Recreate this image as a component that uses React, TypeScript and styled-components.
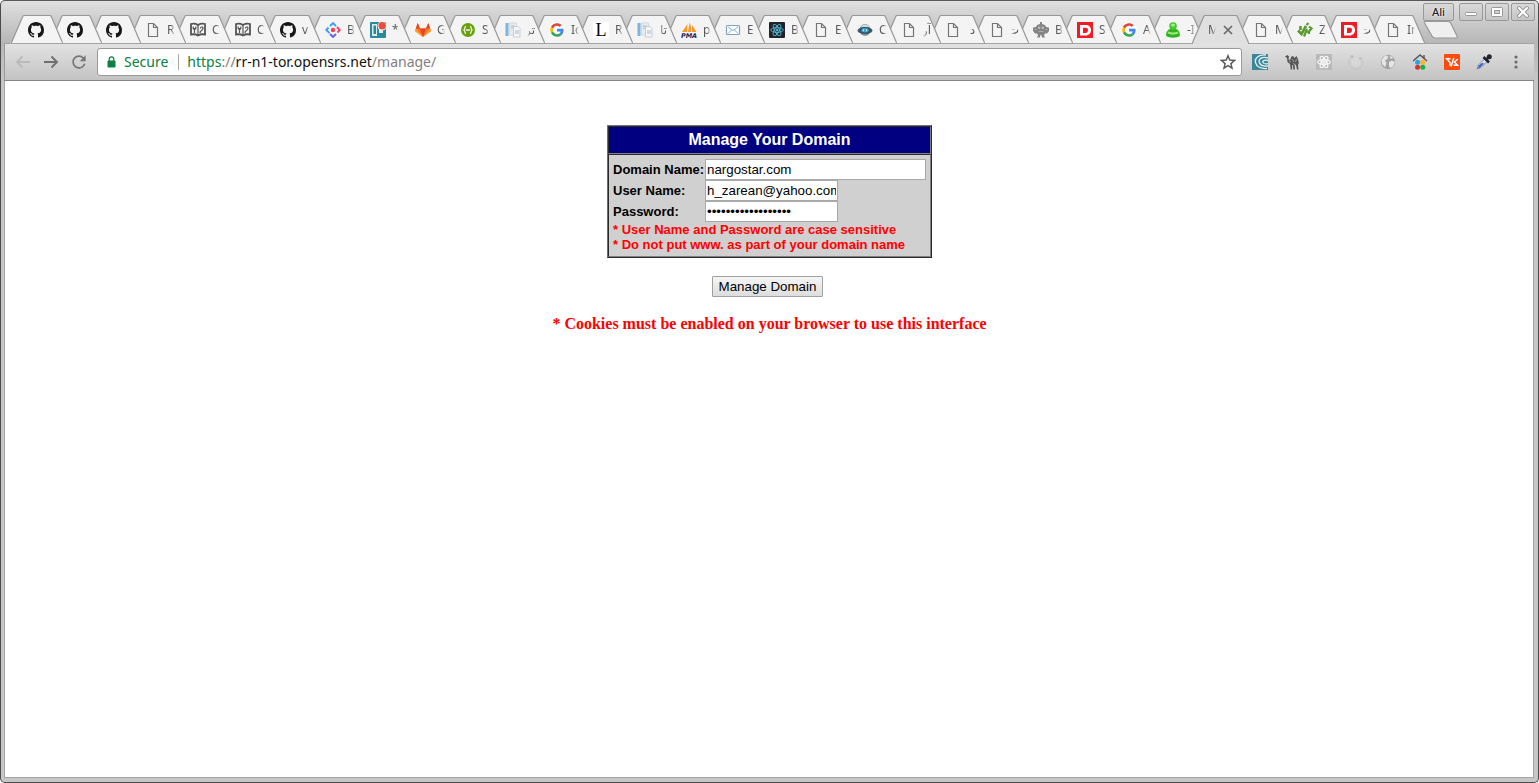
import React from "react";
import styled, { createGlobalStyle } from "styled-components";

const GlobalStyle = createGlobalStyle`
  * { box-sizing: border-box; }
  html, body { margin: 0; padding: 0; background: #ffffff; }
`;

const ui = `"Noto Sans", "DejaVu Sans", sans-serif`;
const arial = `"Liberation Sans", Arial, sans-serif`;

const Window = styled.div`
  display: flex;
  flex-direction: column;
  min-height: 100vh;
  padding: 0 4px 4px;
  border: 1px solid #4b4b4b;
  border-top-color: #5a575c;
  border-radius: 5px;
  background: linear-gradient(#e0e0e0 0, #b6b6b6 42px, #c6c6c6 80px, #c6c6c6 100%);
  position: relative;
  font-family: ${ui};
`;

const TitleBar = styled.header`
  display: flex;
  align-items: flex-end;
  height: 42px;
  padding-left: 6px;
`;

const TabStrip = styled.nav`
  display: flex;
  align-items: flex-end;
  padding-right: 13px;
`;

const TabButton = styled.button<{ $width: number; $order: number; $active?: boolean }>`
  position: relative;
  z-index: ${(p) => (p.$active ? 60 : p.$order)};
  flex: none;
  display: flex;
  align-items: center;
  gap: 6px;
  width: ${(p) => p.$width}px;
  height: ${(p) => (p.$active ? 29 : 28)}px;
  margin: 0 -13px ${(p) => (p.$active ? -1 : 0)}px 0;
  padding: ${(p) => (p.$active ? "0 0 0 16px" : "2px 0 0 17px")};
  border: 0;
  background: none;
  color: #5a5a5a;
  font-family: ${ui};
  font-size: 12px;
`;

const TabShape = styled.svg`
  position: absolute;
  inset: 0;
  z-index: -1;
`;

const TabLabel = styled.span<{ $rtl?: boolean }>`
  width: 8px;
  overflow: hidden;
  white-space: nowrap;
  line-height: 16px;
  direction: ${(p) => (p.$rtl ? "rtl" : "ltr")};
  text-align: ${(p) => (p.$rtl ? "right" : "left")};
  mask-image: linear-gradient(to ${(p) => (p.$rtl ? "left" : "right")}, #000 50%, transparent);
`;

const Favicon = styled.svg`
  flex: none;
  display: block;
  width: 16px;
  height: 16px;
`;

const NewTab = styled.button`
  width: 36px;
  height: 18px;
  margin: 0 0 4px -2px;
  padding: 0;
  border: 0;
  background: none;
  svg { display: block; }
`;

const WindowControls = styled.div`
  position: absolute;
  top: 2px;
  right: 3px;
  display: flex;
  gap: 2px;
`;

const ControlButton = styled.button<{ $user?: boolean }>`
  display: flex;
  align-items: center;
  justify-content: center;
  width: ${(p) => (p.$user ? 31 : 24)}px;
  height: 18px;
  margin-right: ${(p) => (p.$user ? 3 : 0)}px;
  padding: 0;
  border: 1px solid #989898;
  border-radius: 2px;
  background: linear-gradient(#d9d9d9, #c6c6c6);
  color: #222222;
  font-family: ${ui};
  font-size: 11px;
  font-weight: 500;
  line-height: 14px;
  text-shadow: 0 0 2px #ffffff, 0 0 2px #ffffff;
`;

const Toolbar = styled.div`
  display: flex;
  align-items: center;
  height: 38px;
  padding: 0 2px 0 4px;
  border-top: 1px solid #a3a3a3;
  border-bottom: 1px solid #858585;
  border-left: 1px solid #9a9a9a;
  margin-left: -1px;
  background: linear-gradient(#e2e2e2, #c3c3c3);
`;

const IconButton = styled.button`
  display: flex;
  align-items: center;
  justify-content: center;
  width: 28px;
  height: 28px;
  padding: 0;
  border: 0;
  background: none;
`;

const AddressBar = styled.div`
  flex: 1;
  display: flex;
  align-items: center;
  height: 28px;
  margin: 0 2px 0 4px;
  padding: 0 5px 0 9px;
  border: 1px solid #9a9a9a;
  border-radius: 3px;
  background: #ffffff;
  font-size: 14px;
  line-height: 20px;
`;

const Secure = styled.span`
  margin-left: 8px;
  padding-right: 10px;
  color: #0b8043;
`;

const Divider = styled.span`
  width: 1px;
  height: 16px;
  margin-right: 8px;
  background: #a8a8a8;
`;

const Address = styled.span`
  flex: 1;
  color: #808080;
`;
const Scheme = styled.span`color: #0b8043;`;
const Host = styled.span`color: #111111;`;

const StarButton = styled(IconButton)`
  width: 16px;
  height: 20px;
`;

const ExtensionButton = styled(IconButton)`
  width: 32px;
`;

const Page = styled.main`
  flex: 1;
  display: flex;
  flex-direction: column;
  align-items: center;
  padding-top: 44px;
  border: 1px solid #a5a5a5;
  border-width: 0 1px 1px 0;
  background: #ffffff;
  box-shadow: -1px 0 #a5a5a5;
  padding-left: 1px;
`;

const LoginForm = styled.form`
  display: flex;
  flex-direction: column;
  align-items: center;
  margin: 0;
  font-family: ${arial};
`;

const Panel = styled.section`
  border: 1px solid;
  border-color: #707070 #2b2b2b #2b2b2b #707070;
  background: #d0d0d0;
`;

const insetBorder = `
  border: 1px solid;
  border-color: #2b2b2b #808080 #808080 #2b2b2b;
`;

const PanelTitle = styled.h1`
  ${insetBorder}
  margin: 0;
  padding: 4px;
  background: #000080;
  color: #ffffff;
  font-size: 16px;
  line-height: 18px;
  text-align: center;
`;

const PanelBody = styled.div`
  ${insetBorder}
  padding: 4px;
  font-size: 13px;
  font-weight: bold;
  line-height: 15px;
`;

const Field = styled.div`
  display: flex;
  align-items: center;
  height: 21px;
`;

const FieldLabel = styled.label`
  width: 92px;
  white-space: nowrap;
`;

const TextInput = styled.input<{ $wide?: boolean }>`
  width: ${(p) => (p.$wide ? 221 : 133)}px;
  height: 21px;
  margin: 0;
  padding: 1px;
  border: 1px solid #a9a9a9;
  background: #ffffff;
  color: #000000;
  font-family: ${arial};
  outline: none;
`;

const Hint = styled.p`
  margin: 0;
  color: #ff0000;
`;

const SubmitButton = styled.button`
  height: 21px;
  margin: 18px 4px 0 0;
  padding: 0 6px;
  border: 1px solid #a0a0a0;
  border-radius: 1px;
  background: linear-gradient(#f6f6f6, #dddddd);
  color: #000000;
  font-family: ${arial};
  line-height: 18px;
`;

const CookieNote = styled.p`
  margin: 18px 0 0;
  color: #ff0000;
  font-family: "Liberation Serif", "Times New Roman", serif;
  font-size: 16px;
  font-weight: bold;
  line-height: 18px;
`;

/* ---------- favicons ---------- */

const Github = () => (
  <Favicon viewBox="0 0 16 16">
    <path fill="#181616" d="M8 0C3.58 0 0 3.58 0 8c0 3.54 2.29 6.53 5.47 7.59.4.07.55-.17.55-.38 0-.19-.01-.82-.01-1.49-2.01.37-2.53-.49-2.69-.94-.09-.23-.48-.94-.82-1.13-.28-.15-.68-.52-.01-.53.63-.01 1.08.58 1.23.82.72 1.21 1.87.87 2.33.66.07-.52.28-.87.51-1.07-1.78-.2-3.64-.89-3.64-3.95 0-.87.31-1.59.82-2.15-.08-.2-.36-1.02.08-2.12 0 0 .67-.21 2.2.82.64-.18 1.32-.27 2-.27.68 0 1.36.09 2 .27 1.53-1.04 2.2-.82 2.2-.82.44 1.1.16 1.92.08 2.12.51.56.82 1.27.82 2.15 0 3.07-1.87 3.75-3.65 3.95.29.25.54.73.54 1.48 0 1.07-.01 1.93-.01 2.2 0 .21.15.46.55.38A8.013 8.013 0 0016 8c0-4.42-3.58-8-8-8z" />
  </Favicon>
);

const Doc = () => (
  <Favicon viewBox="0 0 16 16">
    <path d="M3.500 1.500h5l4 4v9h-9z M8.500 1.500v4h4" fill="none" stroke="#757575" strokeWidth="1.200" />
  </Favicon>
);

const Book = () => (
  <Favicon viewBox="0 0 16 16">
    <path d="M1 2C4 1.200 6 1.800 8 3c2-1.200 4-1.800 7-1v10.500c-3-.6-5-.3-7 1-2-1.300-4-1.600-7-1z" fill="#f4f4f4" stroke="#555" strokeWidth="1.800" />
    <path d="M8 3v11M4.500 6v5M3.200 4.500v2q1.300 1.500 2.600 0v-2" fill="none" stroke="#555" strokeWidth="1.200" />
    <path d="M10 11l.5-2M10.500 6.500c0-2 2.500-2 2.500-.2 0 1.700-2 1.500-2 3.200" fill="none" stroke="#555" strokeWidth="1.200" />
  </Favicon>
);

const BlueDiamond = () => (
  <Favicon viewBox="0 0 16 16">
    <path d="M3.500 5.500L1.300 8l3.200 3.200M5 4l3-2.900 3 2.900" fill="none" stroke="#3aa0f7" strokeWidth="1.900" />
    <path d="M12 5l2.800 3-2.300 2.500" fill="none" stroke="#f0405e" strokeWidth="1.900" />
    <path d="M5 12l3 2.900 3-2.900" fill="none" stroke="#5a62e8" strokeWidth="1.900" />
    <circle cx="8" cy="8" r="2.200" fill="#f2405a" />
  </Favicon>
);

const Board = () => (
  <Favicon viewBox="0 0 16 16">
    <rect width="16" height="16" rx="1" fill="#2a8a9c" />
    <path d="M2 2h5v12H2zM9 7h4v4H9z" fill="#dcebed" />
    <path d="M3.500 3.500h2.500v8.500H3.500z" fill="#2a8a9c" />
    <circle cx="12" cy="4" r="4.500" fill="#f4f4f4" />
    <circle cx="12.200" cy="3.800" r="3.700" fill="#ef4b3f" />
  </Favicon>
);

const Gitlab = () => (
  <Favicon viewBox="0 0 16 16">
    <path d="M8 15L0 9l2.700-8L5 6.500h6L13.300 1 16 9z" fill="#fc6d26" />
    <path d="M8 15L5 6.500h6z" fill="#e24329" />
    <path d="M0 9l1-3 7 9zM16 9l-1-3-7 9z" fill="#fca326" />
    <path d="M2.700 1L5 6.500H.8zM13.300 1L11 6.500h4.200z" fill="#e24329" />
  </Favicon>
);

const Swagger = () => (
  <Favicon viewBox="0 0 16 16">
    <circle cx="8" cy="8" r="7" fill="#6a9f0e" />
    <path d="M6 4.500c-2 0-.5 3-2 3.500 1.500.5 0 3.500 2 3.500M10 4.500c2 0 .5 3 2 3.500-1.500.5 0 3.500-2 3.500M6 8h4" fill="none" stroke="#eef5dc" strokeWidth="1.300" />
  </Favicon>
);

const Papers = () => (
  <Favicon viewBox="0 0 16 16">
    <rect x=".5" y="1" width="3" height="13" fill="#7db4dc" />
    <path d="M4.500 1h7v12h-7z" fill="#e8eaee" stroke="#d4d8dd" />
    <path d="M8.500 4.500H13l2 2v8.500H8.500z" fill="#f4f6f9" stroke="#c8cdd4" />
    <path d="M6 4h3M6 6h2M10 9h4M10 11h4" stroke="#aab8c8" />
  </Favicon>
);

const Google = () => (
  <Favicon viewBox="-4 -4 56 56">
    <circle cx="24" cy="24" r="28" fill="#fff" />
    <path fill="#EA4335" d="M24 9.500c3.540 0 6.710 1.220 9.210 3.600l6.850-6.850C35.900 2.380 30.470 0 24 0 14.620 0 6.510 5.380 2.560 13.220l7.980 6.190C12.430 13.720 17.740 9.500 24 9.500z" />
    <path fill="#4285F4" d="M46.980 24.550c0-1.570-.15-3.090-.38-4.550H24v9.020h12.940c-.58 2.960-2.260 5.480-4.780 7.180l7.730 6c4.510-4.180 7.090-10.360 7.090-17.650z" />
    <path fill="#FBBC05" d="M10.530 28.590c-.48-1.450-.76-2.990-.76-4.590s.27-3.140.76-4.590l-7.980-6.190C.92 16.460 0 20.120 0 24c0 3.880.92 7.540 2.560 10.780l7.970-6.190z" />
    <path fill="#34A853" d="M24 48c6.480 0 11.930-2.130 15.890-5.810l-7.730-6c-2.150 1.450-4.920 2.300-8.160 2.300-6.260 0-11.570-4.220-13.470-9.910l-7.980 6.190C6.510 42.620 14.620 48 24 48z" />
  </Favicon>
);

const LetterL = () => (
  <Favicon viewBox="0 0 16 16">
    <rect width="16" height="16" fill="#fff" />
    <text x="8" y="14" textAnchor="middle" fontFamily="Liberation Serif, serif" fontSize="18" fill="#000">L</text>
  </Favicon>
);

const Pma = () => (
  <Favicon viewBox="0 0 16 16">
    <path d="M1 10L6.500 2 6 10zM7 10L8.500.500c1.500 3 2 6 1.500 9.500zM11 10V3l4.500 7z" fill="#f8982c" />
    <text x="8" y="15.500" textAnchor="middle" fontFamily="DejaVu Sans, sans-serif" fontStyle="italic" fontWeight="bold" fontSize="6.500" fill="#24245c">PMA</text>
  </Favicon>
);

const Mail = () => (
  <Favicon viewBox="0 0 16 16">
    <rect x="1.500" y="3.500" width="13" height="9" rx="1" fill="#fff" stroke="#7fa4bd" strokeWidth="1.200" />
    <path d="M3 5l5 3.500L13 5M3 11.500L6.500 8M13 11.500L9.500 8" fill="none" stroke="#7fb2d6" />
  </Favicon>
);

const Orbits = ({ color, width = 0.9 }: { color: string; width?: number }) => (
  <g fill="none" stroke={color} strokeWidth={width}>
    {[0, 60, 120].map((a) => (
      <ellipse key={a} cx="8" cy="8" rx="6.300" ry="2.400" transform={`rotate(${a} 8 8)`} />
    ))}
    <circle cx="8" cy="8" r="1" fill={color} />
  </g>
);

const ReactDark = () => (
  <Favicon viewBox="0 0 16 16">
    <rect width="16" height="16" rx="1" fill="#20232a" />
    <Orbits color="#50b8d4" />
  </Favicon>
);

const Saturn = () => (
  <Favicon viewBox="0 0 16 16">
    <ellipse cx="8" cy="8" rx="5.500" ry="6" fill="#8b9095" />
    <path d="M3.500 5C6 1.500 10 1.500 12.500 5z" fill="#d5d7d9" />
    <ellipse cx="8" cy="8.500" rx="7.500" ry="3.600" fill="#4b5963" />
    <ellipse cx="8" cy="8.400" rx="5.200" ry="3.200" fill="#1f5673" />
    <ellipse cx="8" cy="8.300" rx="3.800" ry="2.200" fill="#3d9ac6" />
    <path d="M6.500 7.300v2M9.500 7.300v2" stroke="#cfe6f2" strokeWidth="1.200" />
  </Favicon>
);

const Robot = () => (
  <Favicon viewBox="0 0 16 16">
    <path d="M7 0h2v2l3 1 1 2 3 .5V9l-2 2.500h-2L11 13l1 2.500H9L8.500 13h-1L7 15.500H4L5 13l-1-1.500H2L0 9V5.500L3 5l1-2 3-1z" fill="#858585" />
    <path d="M5.500 5h1.500v1.500H5.500zM9 5h1.500v1.500H9zM1.500 7.500h2M12.500 7.500h2M5.500 9.500h5" fill="#ddd" stroke="#b9b9b9" strokeWidth=".8" />
  </Favicon>
);

const RedD = () => (
  <Favicon viewBox="0 0 16 16">
    <rect width="16" height="16" fill="#ee1c25" />
    <path d="M3 3h5.500C12 3 14 5 14 8s-2 5.500-5.500 5.500H3V10h3v1h2.500c1.500 0 2.500-1 2.500-3S10 5.700 8.500 5.700H3z" fill="#fff" />
    <path d="M3 5.500h3v5H3z" fill="#fff" />
  </Favicon>
);

const Messenger = () => (
  <Favicon viewBox="0 0 16 16">
    <path d="M6 6.500C2 8 .5 11 1.300 14c3 2.300 10.400 2.300 13.400 0C15.500 11 14 8 10 6.500z" fill="#2fb41c" />
    <circle cx="8" cy="4" r="3.800" fill="#45c72e" />
    <ellipse cx="8" cy="3" rx="2" ry="1.500" fill="#a9f08f" />
    <path d="M3.500 9.500c3 1.200 6 1.200 9 0l1 2c-4 1.500-7 1.500-11 0z" fill="#9be883" />
  </Favicon>
);

const GreenMark = () => (
  <Favicon viewBox="0 0 16 16">
    <path d="M3.500 4v4M1 8.500l3.500 3.500L9 4" fill="none" stroke="#5a9a2d" strokeWidth="2.600" />
    <path d="M7 14.500L10 7M9.500 3l2-2M10.500 11l4-4.500L12 4.500M12 12V9" fill="none" stroke="#5a9a2d" strokeWidth="2.200" />
  </Favicon>
);

/* ---------- extension icons ---------- */

const Swirl = () => (
  <Favicon viewBox="0 0 16 16">
    <rect width="16" height="16" fill="#3b8799" />
    <path d="M14 1C7 0 2.500 4 3.500 8.500 4.500 12.500 9 15 15 14.500M16 4C10 2 6.500 5 7.200 8c.7 3 4.300 4.500 8.800 4M16 6.500c-4-1-6 .5-5 2 .8 1.200 3 1.700 5 1.200" fill="none" stroke="#e6f1f3" strokeWidth="1.300" />
  </Favicon>
);

const Camel = () => (
  <Favicon viewBox="0 0 16 16">
    <path d="M1 2.500L3.500 1 5 2.500 4.500 5.500 6 6l1.500-3.500L9 2l1.500 2L12.500 2 14 5l.8 4-.8 2 .5 4.500H13L12 11l-1.500-1 .5 5.500H9.500L8.800 11 8 11l.3 4.500H6.800L6 10 3.500 8 3 4z" fill="#555" />
    <path d="M8 5l2 3M12.500 5l-1 3M5 7l2 1M9 9.500l2 1" stroke="#b5b5b5" strokeWidth=".8" />
  </Favicon>
);

const ReactGrey = () => (
  <Favicon viewBox="0 0 16 16">
    <rect width="16" height="16" rx="1" fill="#b9b9b9" />
    <Orbits color="#f6f6f6" width={1.3} />
  </Favicon>
);

const FaintRing = () => (
  <Favicon viewBox="0 0 16 16">
    <g fill="none" stroke="#c3c3c3">
      <path d="M2 4.500A7 7 0 1 0 14 5" />
      <circle cx="8" cy="8.500" r="3.500" stroke="#dedede" />
    </g>
    <circle cx="8" cy="8.500" r="1.500" fill="#dedede" />
    <circle cx="4" cy="2.500" r="1.500" fill="#bcbcbc" />
    <circle cx="12.500" cy="4.500" r="1.300" fill="#bcbcbc" />
  </Favicon>
);

const Globe = () => (
  <Favicon viewBox="0 0 16 16">
    <circle cx="8" cy="8" r="7.200" fill="#a4a4a4" />
    <path d="M1.500 6L5 1.500l3 .5L7.500 5 5 6.500 6.500 9 5 13 2 10zM9 8l3-1.500 3 1.500-2 4.500-3 1.500-1-3zM10 2l3 1.500-1 1.500-2-1z" fill="#e6e6e6" />
  </Favicon>
);

const House = () => (
  <Favicon viewBox="0 0 16 16">
    <path d="M1 7l7-6 7 6M12 1v3" fill="none" stroke="#555" strokeWidth="1.400" />
    <circle cx="5.600" cy="8.300" r="2.500" fill="#1fa8f0" />
    <circle cx="10.800" cy="8.300" r="2.500" fill="#f9b42b" />
    <circle cx="5.600" cy="13.300" r="2.500" fill="#e32b2b" />
    <circle cx="10.800" cy="13.300" r="2.500" fill="#1fae3c" />
  </Favicon>
);

const OrangeTag = () => (
  <Favicon viewBox="0 0 16 16">
    <rect width="16" height="16" rx="1" fill="#ff4a0d" />
    <path d="M6.500 4.700H2.700L6 8.500v3M9.800 4L7 12.500M13.800 5L10.500 8l3 3.300H9.500" fill="none" stroke="#fff" strokeWidth="1.500" />
  </Favicon>
);

const Dropper = () => (
  <Favicon viewBox="0 0 16 16">
    <path d="M1 15l1.500-4 6-6 2.500 2.500-6 6z" fill="#dfe6f5" stroke="#65718c" strokeWidth=".8" />
    <path d="M2 14l1-2.500 3-2.500 2 .5-4 4z" fill="#3358c8" />
    <path d="M7.500 3l5.500 5.500M10 6l3.500-3.500" stroke="#20242c" strokeWidth="2.600" />
    <circle cx="13.300" cy="2.700" r="2.500" fill="#20242c" />
  </Favicon>
);

type TabData = {
  icon?: () => React.JSX.Element;
  label: string;
  pitch: number;
  active?: boolean;
  rtl?: boolean;
};

const t = (icon: TabData["icon"], label: string, pitch = 44): TabData => ({ icon, label, pitch });
const rtl = (icon: TabData["icon"], label: string): TabData => ({ icon, label, pitch: 44, rtl: true });

const tabs: TabData[] = [
  t(Github, "", 39), t(Github, "", 39), t(Github, "", 39),
  t(Doc, "R", 45), t(Book, "C", 45), t(Book, "C", 45), t(Github, "v", 45),
  t(BlueDiamond, "B", 45), t(Board, "*", 45), t(Gitlab, "G", 45), t(Swagger, "S", 45),
  rtl(Papers, "تر"), t(Google, "Ic"), t(LetterL, "R"), rtl(Papers, "تا"), t(Pma, "p"),
  t(Mail, "E"), t(ReactDark, "B"), t(Doc, "E"), t(Saturn, "C"), rtl(Doc, "آر"),
  rtl(Doc, "د"), rtl(Doc, "ت"), t(Robot, "B"), t(RedD, "S"), t(Google, "A"), t(Messenger, "-I"),
  { label: "M", pitch: 44, active: true },
  t(Doc, "M"), t(GreenMark, "Z"), rtl(RedD, "ت"), t(Doc, "In"),
];

const Tab = ({ tab, order }: { tab: TabData; order: number }) => {
  const w = tab.pitch + 13;
  const h = tab.active ? 29 : 28;
  const Icon = tab.icon;
  const d = `M0 ${h}L1 26.500L11.500 2Q12 .5 13.500 .5H${w - 13.5}Q${w - 12} .5 ${w - 11.5} 2L${w - 1} 26.500L${w} ${h}`;
  return (
    <TabButton type="button" $width={w} $order={order} $active={tab.active}>
      <TabShape width={w} height={h} viewBox={`0 0 ${w} ${h}`}>
        <path d={d} fill={tab.active ? "#e0e0e0" : "#f4f4f4"} stroke="#989898" strokeWidth="1.200" />
      </TabShape>
      {Icon && <Icon />}
      {tab.label && <TabLabel $rtl={tab.rtl}>{tab.label}</TabLabel>}
      {tab.active && (
        <svg width="12" height="12" viewBox="0 0 12 12">
          <path d="M2 2l8 8M10 2l-8 8" stroke="#6a6a6a" strokeWidth="1.700" />
        </svg>
      )}
    </TabButton>
  );
};

const extensions = [
  { name: "Swirl", Icon: Swirl }, { name: "Camel", Icon: Camel },
  { name: "React", Icon: ReactGrey }, { name: "Ring", Icon: FaintRing },
  { name: "Globe", Icon: Globe }, { name: "Home", Icon: House },
  { name: "Code", Icon: OrangeTag }, { name: "Color picker", Icon: Dropper },
];

export default function App() {
  return (
    <Window>
      <GlobalStyle />
      <TitleBar>
        <TabStrip>
          {tabs.map((tab, i) => (
            <Tab key={i} tab={tab} order={tabs.length - i} />
          ))}
        </TabStrip>
        <NewTab type="button" aria-label="New tab">
          <svg width="36" height="18" viewBox="0 0 36 18">
            <path d="M2.500 .5H25q2 0 3 2L34 15q.8 2-1 2H12q-2 0-3-2L1.500 2Q1 .5 2.500 .5z" fill="#efefef" stroke="#989898" strokeWidth="1.200" />
          </svg>
        </NewTab>
        <WindowControls>
          <ControlButton type="button" $user>Ali</ControlButton>
          <ControlButton type="button" aria-label="Minimize">
            <svg width="14" height="12" viewBox="0 0 14 12">
              <rect x="1.500" y="6.500" width="11" height="3" rx="1" fill="#fff" stroke="#999" />
            </svg>
          </ControlButton>
          <ControlButton type="button" aria-label="Maximize">
            <svg width="14" height="12" viewBox="0 0 14 12">
              <rect x="1.500" y="1.500" width="11" height="9" rx="1" fill="#fff" stroke="#999" />
              <rect x="4.500" y="4.500" width="5" height="3" fill="#d0d0d0" stroke="#999" />
            </svg>
          </ControlButton>
          <ControlButton type="button" aria-label="Close">
            <svg width="14" height="12" viewBox="0 0 14 12">
              <path d="M3 2l8 8M11 2l-8 8" stroke="#999" strokeWidth="4" strokeLinecap="round" />
              <path d="M3 2l8 8M11 2l-8 8" stroke="#fff" strokeWidth="2" strokeLinecap="round" />
            </svg>
          </ControlButton>
        </WindowControls>
      </TitleBar>

      <Toolbar>
        <IconButton type="button" aria-label="Back">
          <svg width="16" height="16" viewBox="0 0 16 16">
            <path d="M15 8H2M7.500 2.500L2 8l5.500 5.500" fill="none" stroke="#bababa" strokeWidth="1.900" />
          </svg>
        </IconButton>
        <IconButton type="button" aria-label="Forward">
          <svg width="16" height="16" viewBox="0 0 16 16">
            <path d="M1 8h13M8.500 2.500L14 8l-5.500 5.500" fill="none" stroke="#707070" strokeWidth="1.900" />
          </svg>
        </IconButton>
        <IconButton type="button" aria-label="Reload">
          <svg width="20" height="20" viewBox="0 0 24 24">
            <path fill="#757575" d="M17.650 6.350A7.958 7.958 0 0 0 12 4c-4.420 0-7.990 3.580-7.990 8s3.570 8 7.990 8c3.730 0 6.840-2.550 7.730-6h-2.080A5.990 5.990 0 0 1 12 18c-3.310 0-6-2.690-6-6s2.690-6 6-6c1.660 0 3.140.690 4.220 1.780L13 11h7V4l-2.350 2.350z" />
          </svg>
        </IconButton>
        <AddressBar>
          <svg width="9" height="12" viewBox="0 0 9 12">
            <path d="M2.200 5V3.200a2.300 2.300 0 0 1 4.600 0V5" fill="none" stroke="#0b8043" strokeWidth="1.200" />
            <rect x=".5" y="4.500" width="8" height="7" rx="1" fill="#0b8043" />
          </svg>
          <Secure>Secure</Secure>
          <Divider />
          <Address><Scheme>https</Scheme>://<Host>rr-n1-tor.opensrs.net</Host>/manage/</Address>
          <StarButton type="button" aria-label="Bookmark this page">
            <svg width="16" height="16" viewBox="0 0 16 16">
              <path d="M8 1.800l1.800 4.300 4.700.4-3.600 3.100 1.100 4.600L8 11.700l-4 2.500 1.100-4.600L1.500 6.500l4.700-.4z" fill="none" stroke="#5a5a5a" strokeWidth="1.500" />
            </svg>
          </StarButton>
        </AddressBar>
        {extensions.map(({ name, Icon }) => (
          <ExtensionButton key={name} type="button" aria-label={name}><Icon /></ExtensionButton>
        ))}
        <ExtensionButton type="button" aria-label="Menu">
          <svg width="16" height="16" viewBox="0 0 16 16" fill="#6b6b6b">
            <circle cx="8" cy="3" r="1.600" /><circle cx="8" cy="8" r="1.600" /><circle cx="8" cy="13" r="1.600" />
          </svg>
        </ExtensionButton>
      </Toolbar>

      <Page>
        <LoginForm>
          <Panel>
            <PanelTitle>Manage Your Domain</PanelTitle>
            <PanelBody>
              <Field>
                <FieldLabel htmlFor="domain">Domain Name:</FieldLabel>
                <TextInput id="domain" type="text" defaultValue="nargostar.com" $wide />
              </Field>
              <Field>
                <FieldLabel htmlFor="user">User Name:</FieldLabel>
                <TextInput id="user" type="text" defaultValue="h_zarean@yahoo.com" />
              </Field>
              <Field>
                <FieldLabel htmlFor="password">Password:</FieldLabel>
                <TextInput id="password" type="password" defaultValue="••••••••••••••••••" />
              </Field>
              <Hint>* User Name and Password are case sensitive</Hint>
              <Hint>* Do not put www. as part of your domain name</Hint>
            </PanelBody>
          </Panel>
          <SubmitButton type="submit">Manage Domain</SubmitButton>
        </LoginForm>
        <CookieNote>* Cookies must be enabled on your browser to use this interface</CookieNote>
      </Page>
    </Window>
  );
}
